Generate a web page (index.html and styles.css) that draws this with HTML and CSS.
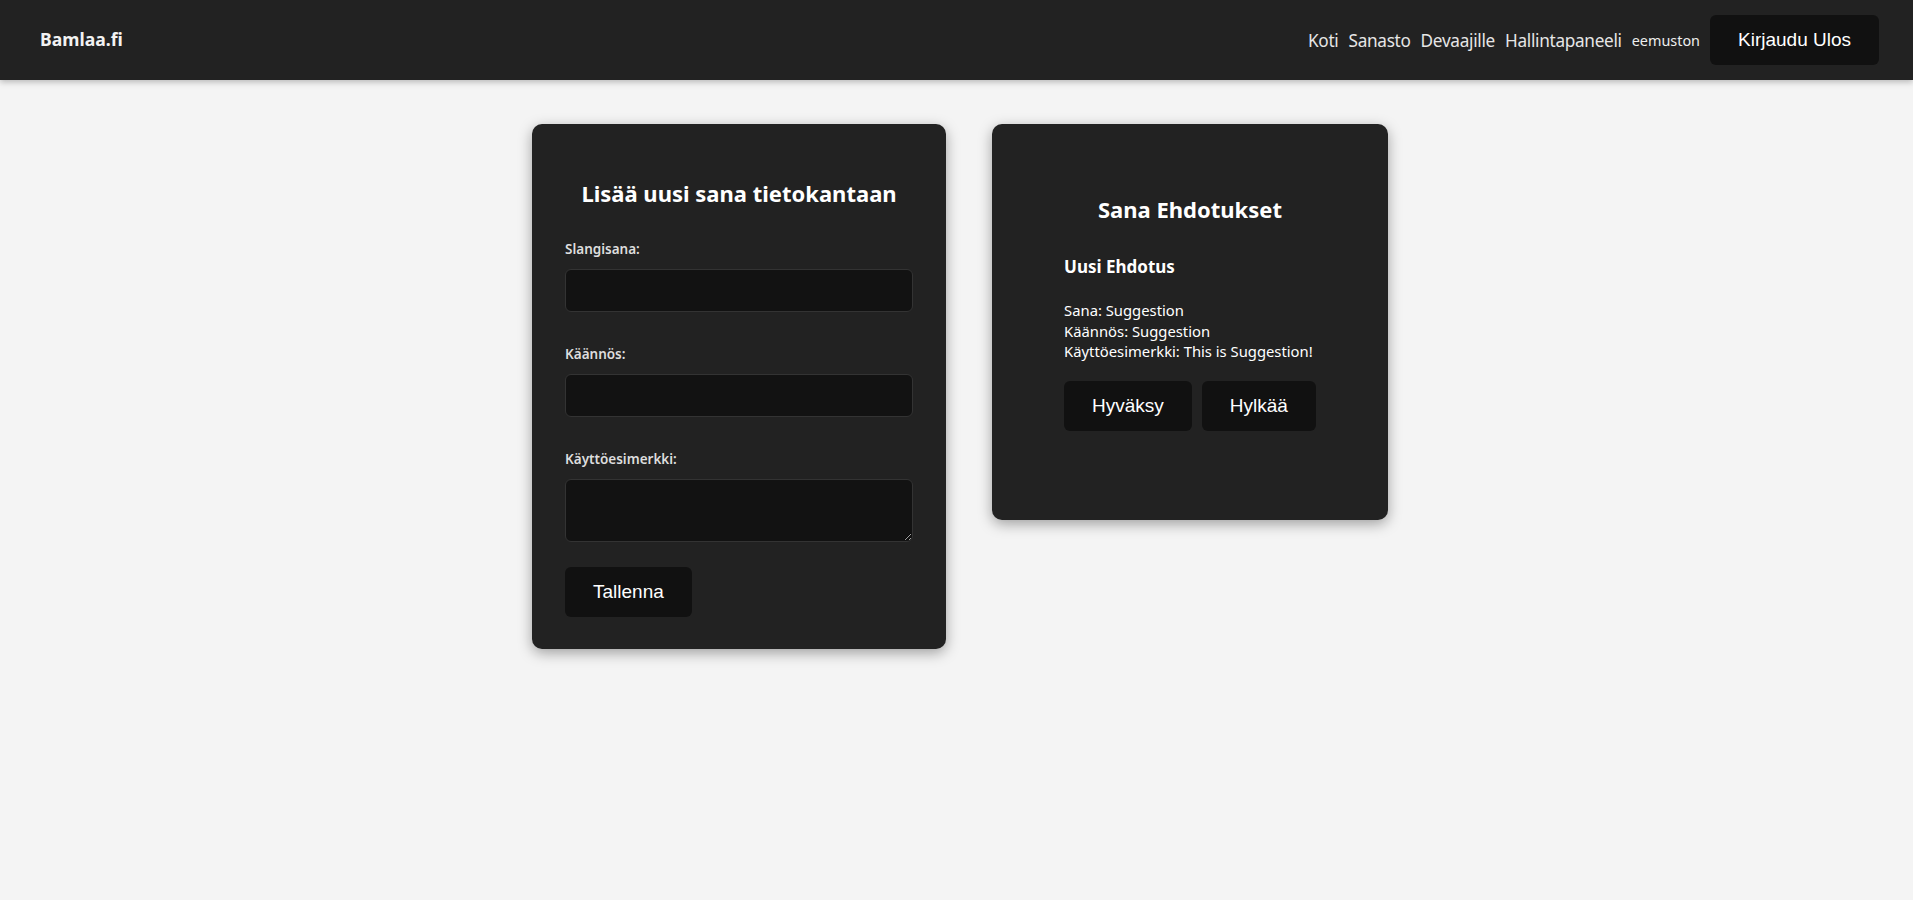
FILE: index.html
```html
<!DOCTYPE html>
<html lang="fi">
<head>
<meta charset="utf-8">
<title>Bamlaa.fi</title>
<link rel="stylesheet" href="styles.css">
</head>
<body>
<header class="navbar">
  <div class="logo">Bamlaa.fi</div>
  <nav class="nav">
    <a class="nav-link" href="#">Koti</a>
    <a class="nav-link" href="#">Sanasto</a>
    <a class="nav-link" href="#">Devaajille</a>
    <a class="nav-link" href="#">Hallintapaneeli</a>
    <span class="user">eemuston</span>
    <button class="btn">Kirjaudu Ulos</button>
  </nav>
</header>
<main class="main">
  <section class="card card-form">
    <h2 class="card-title">Lisää uusi sana tietokantaan</h2>
    <form class="form">
      <label class="label">Slangisana:</label>
      <input class="input" type="text">
      <label class="label">Käännös:</label>
      <input class="input" type="text">
      <label class="label">Käyttöesimerkki:</label>
      <textarea class="input textarea"></textarea>
      <div><button class="btn" type="button">Tallenna</button></div>
    </form>
  </section>
  <section class="card card-suggest">
    <h2 class="card-title suggest-title">Sana Ehdotukset</h2>
    <div class="suggestion">
      <h3 class="suggest-head">Uusi Ehdotus</h3>
      <p class="suggest-line">Sana: Suggestion</p>
      <p class="suggest-line">Käännös: Suggestion</p>
      <p class="suggest-line">Käyttöesimerkki: This is Suggestion!</p>
      <div class="actions">
        <button class="btn">Hyväksy</button>
        <button class="btn">Hylkää</button>
      </div>
    </div>
  </section>
</main>
</body>
</html>
```
FILE: styles.css
```css
* { box-sizing: border-box; }
html, body { margin: 0; padding: 0; }
body {
  background: #f4f4f4;
  font-family: "Noto Sans", "Open Sans", sans-serif;
  color: #fff;
  min-height: 900px;
}
.navbar {
  height: 80px;
  background: #222;
  display: flex;
  align-items: center;
  justify-content: space-between;
  padding: 0 34px 0 40px;
  box-shadow: 0 2px 6px rgba(0,0,0,0.25);
}
.logo {
  font-weight: 700;
  font-size: 17.6px;
  color: #f2f2f2;
  margin-top: -3px;
}
.nav {
  display: flex;
  align-items: center;
  gap: 10px;
}
.nav-link {
  color: #e6e6e6;
  text-decoration: none;
  font-size: 17.2px;
  letter-spacing: -0.3px;
}
.user {
  font-size: 14.4px;
  color: #eee;
}
.btn {
  background: #111;
  color: #fff;
  border: none;
  border-radius: 6px;
  font-family: "Liberation Sans", Arial, sans-serif;
  font-size: 19px;
  line-height: 22px;
  padding: 14px 28px;
  cursor: pointer;
}
.main {
  display: flex;
  justify-content: center;
  align-items: flex-start;
  gap: 46px;
  padding: 44px 0 0 7px;
}
.card {
  background: #222;
  border-radius: 10px;
  box-shadow: 0 4px 14px rgba(0,0,0,0.35);
}
.card-form {
  width: 414px;
  padding: 32px 33px 32px 33px;
}
.card-title {
  margin: 21px 0 0;
  font-size: 22px;
  line-height: 32px;
  font-weight: 700;
  text-align: center;
  color: #fff;
}
.form {
  display: flex;
  flex-direction: column;
  margin-top: 31px;
}
.label {
  font-size: 13.5px;
  font-weight: 600;
  line-height: 19px;
  color: #ddd;
  margin-bottom: 10px;
}
.input {
  width: 100%;
  height: 43px;
  background: #121212;
  border: 1px solid #333;
  border-radius: 6px;
  color: #fff;
  margin-bottom: 33px;
  font-family: inherit;
}
.textarea {
  height: 63px;
  margin-bottom: 25px;
  resize: vertical;
}
.card-suggest {
  width: 396px;
  height: 396px;
  padding: 48px 0;
  display: flex;
  flex-direction: column;
  align-items: center;
}
.suggestion {
  margin-top: 29px;
}
.suggest-head {
  margin: 0 0 21px;
  font-size: 17px;
  line-height: 25px;
  font-weight: 700;
}
.suggest-line {
  margin: 0;
  font-size: 14.8px;
  line-height: 20.5px;
}
.actions {
  display: flex;
  gap: 10px;
  margin-top: 19px;
}
```
